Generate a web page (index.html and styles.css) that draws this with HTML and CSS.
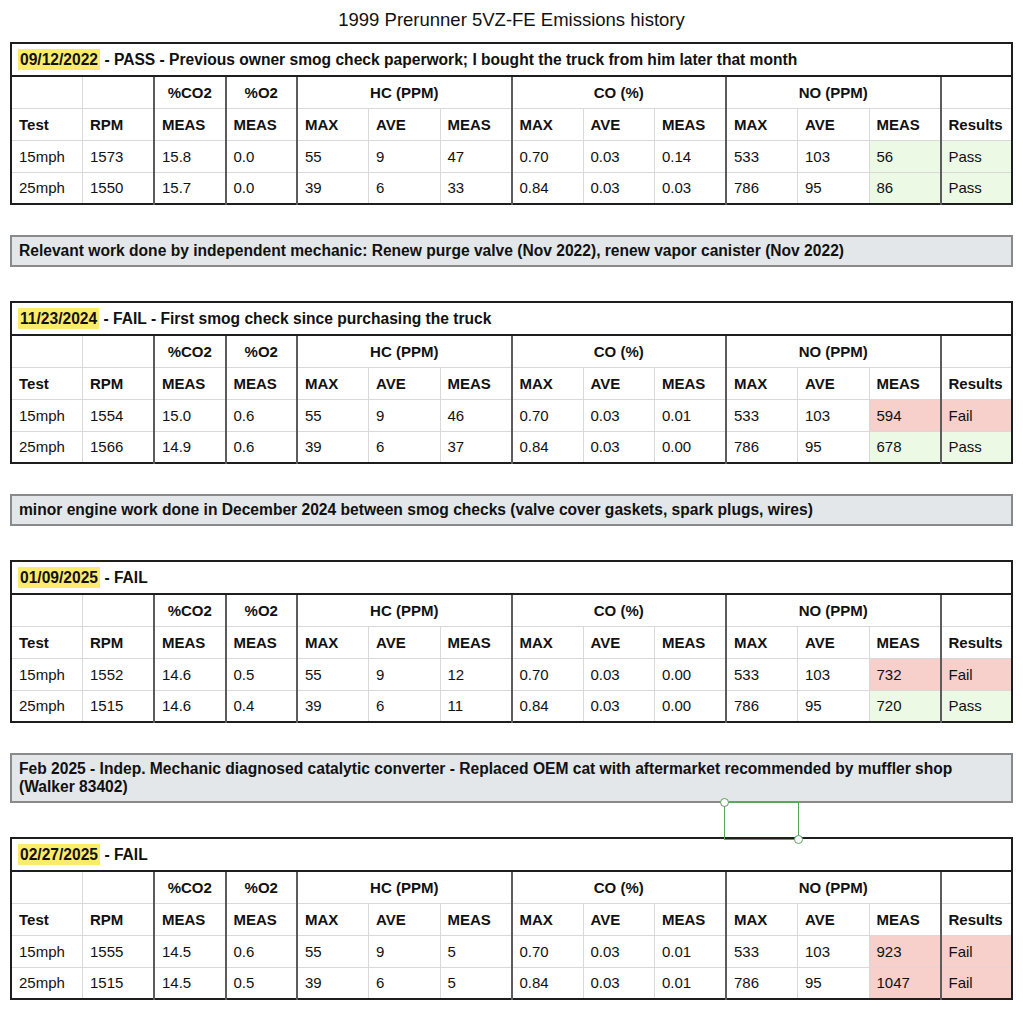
FILE: index.html
```html
<!DOCTYPE html>
<html>
<head>
<meta charset="utf-8">
<title>1999 Prerunner 5VZ-FE Emissions history</title>
<link rel="stylesheet" href="styles.css">
</head>
<body>
<div class="page">
  <h1 class="doc-title">1999 Prerunner 5VZ-FE Emissions history</h1>

  <table class="smog">
    <tr class="title-row"><td colspan="14"><span class="hl">09/12/2022</span> - PASS - Previous owner smog check paperwork; I bought the truck from him later that month</td></tr>
    <tr class="hdr1"><td></td><td></td><td class="g">%CO2</td><td class="g">%O2</td><td class="g" colspan="3">HC (PPM)</td><td class="g" colspan="3">CO (%)</td><td class="g" colspan="3">NO (PPM)</td><td class="g"></td></tr>
    <tr class="hdr2"><td>Test</td><td>RPM</td><td class="g">MEAS</td><td class="g">MEAS</td><td class="g">MAX</td><td>AVE</td><td>MEAS</td><td class="g">MAX</td><td>AVE</td><td>MEAS</td><td class="g">MAX</td><td>AVE</td><td>MEAS</td><td class="g">Results</td></tr>
    <tr><td>15mph</td><td>1573</td><td class="g">15.8</td><td class="g">0.0</td><td class="g">55</td><td>9</td><td>47</td><td class="g">0.70</td><td>0.03</td><td>0.14</td><td class="g">533</td><td>103</td><td class="pass">56</td><td class="g pass">Pass</td></tr>
    <tr><td>25mph</td><td>1550</td><td class="g">15.7</td><td class="g">0.0</td><td class="g">39</td><td>6</td><td>33</td><td class="g">0.84</td><td>0.03</td><td>0.03</td><td class="g">786</td><td>95</td><td class="pass">86</td><td class="g pass">Pass</td></tr>
  </table>

  <div class="note">Relevant work done by independent mechanic: Renew purge valve (Nov 2022), renew vapor canister (Nov 2022)</div>

  <table class="smog">
    <tr class="title-row"><td colspan="14"><span class="hl">11/23/2024</span> - FAIL - First smog check since purchasing the truck</td></tr>
    <tr class="hdr1"><td></td><td></td><td class="g">%CO2</td><td class="g">%O2</td><td class="g" colspan="3">HC (PPM)</td><td class="g" colspan="3">CO (%)</td><td class="g" colspan="3">NO (PPM)</td><td class="g"></td></tr>
    <tr class="hdr2"><td>Test</td><td>RPM</td><td class="g">MEAS</td><td class="g">MEAS</td><td class="g">MAX</td><td>AVE</td><td>MEAS</td><td class="g">MAX</td><td>AVE</td><td>MEAS</td><td class="g">MAX</td><td>AVE</td><td>MEAS</td><td class="g">Results</td></tr>
    <tr><td>15mph</td><td>1554</td><td class="g">15.0</td><td class="g">0.6</td><td class="g">55</td><td>9</td><td>46</td><td class="g">0.70</td><td>0.03</td><td>0.01</td><td class="g">533</td><td>103</td><td class="fail">594</td><td class="g fail">Fail</td></tr>
    <tr><td>25mph</td><td>1566</td><td class="g">14.9</td><td class="g">0.6</td><td class="g">39</td><td>6</td><td>37</td><td class="g">0.84</td><td>0.03</td><td>0.00</td><td class="g">786</td><td>95</td><td class="pass">678</td><td class="g pass">Pass</td></tr>
  </table>

  <div class="note">minor engine work done in December 2024 between smog checks (valve cover gaskets, spark plugs, wires)</div>

  <table class="smog">
    <tr class="title-row"><td colspan="14"><span class="hl">01/09/2025</span> - FAIL</td></tr>
    <tr class="hdr1"><td></td><td></td><td class="g">%CO2</td><td class="g">%O2</td><td class="g" colspan="3">HC (PPM)</td><td class="g" colspan="3">CO (%)</td><td class="g" colspan="3">NO (PPM)</td><td class="g"></td></tr>
    <tr class="hdr2"><td>Test</td><td>RPM</td><td class="g">MEAS</td><td class="g">MEAS</td><td class="g">MAX</td><td>AVE</td><td>MEAS</td><td class="g">MAX</td><td>AVE</td><td>MEAS</td><td class="g">MAX</td><td>AVE</td><td>MEAS</td><td class="g">Results</td></tr>
    <tr><td>15mph</td><td>1552</td><td class="g">14.6</td><td class="g">0.5</td><td class="g">55</td><td>9</td><td>12</td><td class="g">0.70</td><td>0.03</td><td>0.00</td><td class="g">533</td><td>103</td><td class="fail">732</td><td class="g fail">Fail</td></tr>
    <tr><td>25mph</td><td>1515</td><td class="g">14.6</td><td class="g">0.4</td><td class="g">39</td><td>6</td><td>11</td><td class="g">0.84</td><td>0.03</td><td>0.00</td><td class="g">786</td><td>95</td><td class="pass">720</td><td class="g pass">Pass</td></tr>
  </table>

  <div class="note note-tall">Feb 2025 - Indep. Mechanic diagnosed catalytic converter - Replaced OEM cat with aftermarket recommended by muffler shop (Walker 83402)</div>

  <table class="smog">
    <tr class="title-row"><td colspan="14"><span class="hl">02/27/2025</span> - FAIL</td></tr>
    <tr class="hdr1"><td></td><td></td><td class="g">%CO2</td><td class="g">%O2</td><td class="g" colspan="3">HC (PPM)</td><td class="g" colspan="3">CO (%)</td><td class="g" colspan="3">NO (PPM)</td><td class="g"></td></tr>
    <tr class="hdr2"><td>Test</td><td>RPM</td><td class="g">MEAS</td><td class="g">MEAS</td><td class="g">MAX</td><td>AVE</td><td>MEAS</td><td class="g">MAX</td><td>AVE</td><td>MEAS</td><td class="g">MAX</td><td>AVE</td><td>MEAS</td><td class="g">Results</td></tr>
    <tr><td>15mph</td><td>1555</td><td class="g">14.5</td><td class="g">0.6</td><td class="g">55</td><td>9</td><td>5</td><td class="g">0.70</td><td>0.03</td><td>0.01</td><td class="g">533</td><td>103</td><td class="fail">923</td><td class="g fail">Fail</td></tr>
    <tr><td>25mph</td><td>1515</td><td class="g">14.5</td><td class="g">0.5</td><td class="g">39</td><td>6</td><td>5</td><td class="g">0.84</td><td>0.03</td><td>0.01</td><td class="g">786</td><td>95</td><td class="fail">1047</td><td class="g fail">Fail</td></tr>
  </table>

  <div class="selection">
    <span class="handle handle-tl"></span>
    <span class="handle handle-br"></span>
  </div>
</div>
</body>
</html>
```

FILE: styles.css
```css
* { box-sizing: border-box; }

html, body {
  margin: 0;
  padding: 0;
  background: #ffffff;
}

body {
  font-family: "Liberation Sans", Arial, Helvetica, sans-serif;
  color: #111111;
}

.page {
  position: relative;
  padding: 0 10px;
  display: flex;
  flex-direction: column;
}

.doc-title {
  margin: 0;
  height: 42px;
  line-height: 40px;
  font-size: 18.5px;
  font-weight: normal;
  text-align: center;
  color: #111;
}

.smog {
  width: 1003px;
  border-collapse: collapse;
  table-layout: fixed;
  border: 2px solid #1e1e1e;
  font-size: 15px;
}

.smog td {
  border: 1px solid #d9d9d9;
  height: 32px;
  padding: 0 7px;
  vertical-align: middle;
  white-space: nowrap;
}

.smog td.g {
  border-left: 2px solid #5c5c5c;
}

.smog .title-row td {
  height: 33px;
  font-size: 15.6px;
  font-weight: bold;
  border-bottom: 2px solid #1e1e1e;
  padding-left: 6px;
}

.smog .hdr1 td {
  font-weight: bold;
  text-align: center;
}

.smog .hdr2 td {
  font-weight: bold;
}

.hl {
  background: #fdec6b;
  padding: 2px 2px;
}

.smog td.pass { background: #ecf9e4; }
.smog td.fail { background: #f7d0cc; }

.note {
  margin: 30px 0 34px;
  width: 1003px;
  height: 32px;
  line-height: 28px;
  padding: 0 7px;
  background: #e3e7e9;
  border: 2px solid #8a8a8a;
  font-size: 15.6px;
  font-weight: bold;
  white-space: nowrap;
}

.note.note-tall {
  height: 50px;
  line-height: 18px;
  padding-top: 5px;
  white-space: normal;
}

.selection {
  position: absolute;
  left: 724px;
  top: 802px;
  width: 75px;
  height: 38px;
  border: 1px solid #55a55a;
}

.handle {
  position: absolute;
  width: 9px;
  height: 9px;
  border-radius: 50%;
  background: #ffffff;
  border: 1px solid #55a55a;
}

.handle-tl { left: -5px; top: -5px; }
.handle-br { right: -5px; bottom: -5px; }
```
